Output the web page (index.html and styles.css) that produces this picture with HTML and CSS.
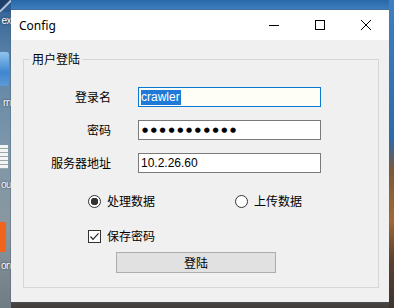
FILE: index.html
```html
<!DOCTYPE html>
<html lang="zh-CN">
<head>
    <meta charset="UTF-8">
    <title>Config</title>
    <link rel="stylesheet" href="styles.css">
</head>
<body>
    <div class="desktop">
        <!-- desktop icons peeking out behind the dialog -->
        <div class="icons">
            <div class="icon-top"></div>
            <div class="icon-label first">ex</div>
            <div class="icon-img blue"></div>
            <div class="icon-label second">rn</div>
            <div class="icon-img doc"></div>
            <div class="icon-label third">ou</div>
            <div class="icon-img orange"></div>
            <div class="icon-label fourth">on</div>
        </div>

        <div class="window">
            <div class="titlebar">
                <span class="title">Config</span>
                <div class="caption">
                    <span class="cap-btn">
                        <svg width="10" height="10" viewBox="0 0 10 10"><path d="M0 5.5h10" stroke="#000" stroke-width="1"/></svg>
                    </span>
                    <span class="cap-btn">
                        <svg width="10" height="10" viewBox="0 0 10 10"><rect x="0.5" y="0.5" width="9" height="9" fill="none" stroke="#000" stroke-width="1"/></svg>
                    </span>
                    <span class="cap-btn">
                        <svg width="10" height="10" viewBox="0 0 10 10"><path d="M0 0L10 10M10 0L0 10" stroke="#000" stroke-width="1"/></svg>
                    </span>
                </div>
            </div>

            <div class="client">
                <fieldset class="group">
                    <legend>用户登陆</legend>

                    <div class="form-grid">
                        <label>登录名</label>
                        <div class="field focused"><span class="sel">crawler</span></div>

                        <label>密码</label>
                        <div class="field"><span class="dots">●●●●●●●●●●●</span></div>

                        <label>服务器地址</label>
                        <div class="field">10.2.26.60</div>
                    </div>

                    <div class="options">
                        <div class="opt"><span class="radio checked"></span>处理数据</div>
                        <div class="opt"><span class="radio"></span>上传数据</div>
                    </div>

                    <div class="remember">
                        <span class="checkbox">
                            <svg width="11" height="11" viewBox="0 0 11 11"><path d="M1.5 5.5l2.5 2.8 5.5-6" fill="none" stroke="#222" stroke-width="1.2"/></svg>
                        </span>
                        保存密码
                    </div>

                    <button class="login-btn">登陆</button>
                </fieldset>
            </div>
        </div>

        <div class="right-strip"></div>
    </div>
</body>
</html>
```

FILE: styles.css
```css
* {
    margin: 0;
    padding: 0;
    box-sizing: border-box;
}

body {
    width: 394px;
    height: 308px;
    overflow: hidden;
    font-family: "Noto Sans", "Noto Sans CJK SC", sans-serif;
    font-size: 12px;
}

.desktop {
    display: flex;
    height: 308px;
    background: linear-gradient(180deg, #2a67a8 0px, #3f80bf 10px, #6c7a80 290px, #4b4744 302px, #3f3c3a 308px);
}

/* left strip with desktop icons */
.icons {
    width: 11px;
    flex-shrink: 0;
    display: flex;
    flex-direction: column;
    background: linear-gradient(180deg, #2f5f95 0px, #5c84a8 60px, #7f98aa 150px, #8a979e 230px, #6f7c84 308px);
    overflow: hidden;
}

.icon-top {
    flex-shrink: 0;
    height: 12px;
    background: linear-gradient(135deg, #1f3f6a 40%, #d8e4f0 50%, #2a5a90 60%);
}

.icon-label {
    flex-shrink: 0;
    height: 14px;
    line-height: 14px;
    text-align: right;
    white-space: nowrap;
    color: #fff;
    font-family: "Liberation Sans", sans-serif;
    font-size: 10px;
    letter-spacing: -0.5px;
    text-shadow: 0 0 2px #223;
}

.icon-label.first { margin-top: 2px; }
.icon-label.second { margin-top: 10px; }
.icon-label.third { margin-top: 9px; }
.icon-label.fourth { margin-top: 7px; }

.icon-img {
    flex-shrink: 0;
}

.icon-img.blue {
    margin-top: 24px;
    width: 9px;
    height: 34px;
    border-radius: 0 3px 3px 0;
    background: linear-gradient(180deg, #8fc4ee, #3f86cf 60%, #5e9bd6);
}

.icon-img.doc {
    margin-top: 35px;
    width: 8px;
    height: 24px;
    background: repeating-linear-gradient(180deg, #f4f4f4 0 3px, #9aa 3px 4px);
}

.icon-img.orange {
    margin-top: 30px;
    width: 6px;
    height: 30px;
    background: #f0641e;
}

.right-strip {
    width: 5px;
    flex-shrink: 0;
    background: linear-gradient(180deg, #3f7fc0 0px, #2f6aa8 140px, #7a5a3a 170px, #a06a38 220px, #5a4030 260px, #3c3430 308px);
}

/* dialog window */
.window {
    width: 378px;
    height: 292px;
    flex-shrink: 0;
    margin-top: 10px;
    display: flex;
    flex-direction: column;
    background: #f0f0f0;
    box-shadow: 0 0 0 1px rgba(70, 90, 110, 0.35);
}

.titlebar {
    height: 30px;
    display: flex;
    justify-content: space-between;
    align-items: center;
    background: #fff;
}

.title {
    padding-left: 8px;
    font-family: "Noto Sans", sans-serif;
    font-size: 12px;
    color: #000;
}

.caption {
    display: flex;
}

.cap-btn {
    width: 46px;
    height: 30px;
    display: flex;
    align-items: center;
    justify-content: center;
}

.client {
    flex: 1;
    padding: 11px 10px 0 12px;
}

.group {
    border: 1px solid #d6d6d6;
    padding: 20px 0 14px 0;
    font-family: "Noto Sans CJK SC", sans-serif;
    font-size: 12px;
    color: #000;
}

.group legend {
    margin-left: 6px;
    padding: 0 2px;
    line-height: 16px;
}

.form-grid {
    display: grid;
    grid-template-columns: 87px 183px;
    column-gap: 27px;
    row-gap: 13px;
    align-items: center;
}

.form-grid label {
    text-align: right;
    line-height: 16px;
}

.field {
    height: 20px;
    padding-left: 2px;
    display: flex;
    align-items: center;
    background: #fff;
    border: 1px solid #7a7a7a;
    font-family: "Liberation Sans", sans-serif;
    font-size: 12px;
}

.field.focused {
    border-color: #0a78d4;
    background: #fffef6;
}

.sel {
    background: #1e7ad6;
    color: #fff;
    line-height: 15px;
    padding-right: 1px;
}

.dots {
    font-family: "DejaVu Sans", sans-serif;
    font-size: 7px;
    letter-spacing: 2.7px;
    padding-left: 1px;
}

.options {
    margin-top: 20px;
    display: flex;
    padding-left: 64px;
    line-height: 16px;
}

.opt {
    display: flex;
    align-items: center;
    gap: 6px;
}

.opt:first-child {
    width: 147px;
}

.radio {
    width: 13px;
    height: 13px;
    border: 1px solid #333;
    border-radius: 50%;
    background: #fff;
}

.radio.checked {
    background: radial-gradient(circle, #333 0 3.5px, #fff 4px);
}

.remember {
    margin-top: 19px;
    padding-left: 64px;
    display: flex;
    align-items: center;
    gap: 6px;
    line-height: 16px;
}

.checkbox {
    width: 13px;
    height: 13px;
    border: 1px solid #333;
    background: #fff;
    display: flex;
}

.login-btn {
    display: block;
    margin: 8px 0 0 92px;
    width: 160px;
    height: 21px;
    background: #e1e1e1;
    border: 1px solid #adadad;
    font-family: "Noto Sans CJK SC", sans-serif;
    font-size: 12px;
    color: #000;
}
```
